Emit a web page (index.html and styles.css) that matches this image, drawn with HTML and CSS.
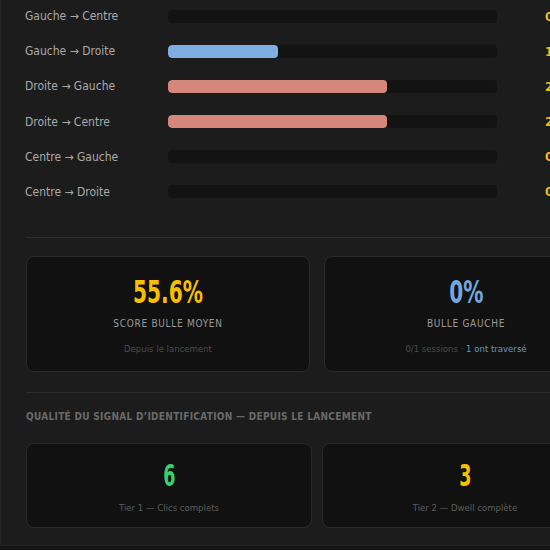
FILE: index.html
```html
<!DOCTYPE html>
<html lang="fr">
<head>
    <meta charset="UTF-8">
    <title>Stats bulles</title>
    <link rel="stylesheet" href="styles.css">
</head>
<body>
    <div class="panel">
        <div class="transitions">
            <div class="trow">
                <span class="tlabel">Gauche → Centre</span>
                <div class="track"></div>
                <span class="tval">0</span>
            </div>
            <div class="trow">
                <span class="tlabel">Gauche → Droite</span>
                <div class="track"><div class="fill bleu" style="width: 33.3%"></div></div>
                <span class="tval">1</span>
            </div>
            <div class="trow">
                <span class="tlabel">Droite → Gauche</span>
                <div class="track"><div class="fill rouge" style="width: 66.7%"></div></div>
                <span class="tval">2</span>
            </div>
            <div class="trow">
                <span class="tlabel">Droite → Centre</span>
                <div class="track"><div class="fill rouge" style="width: 66.7%"></div></div>
                <span class="tval">2</span>
            </div>
            <div class="trow">
                <span class="tlabel">Centre → Gauche</span>
                <div class="track"></div>
                <span class="tval">0</span>
            </div>
            <div class="trow">
                <span class="tlabel">Centre → Droite</span>
                <div class="track"></div>
                <span class="tval">0</span>
            </div>
        </div>

        <hr class="sep">

        <div class="cards deux">
            <div class="card">
                <div class="big jaune">55.6%</div>
                <div class="ctitle">SCORE BULLE MOYEN</div>
                <div class="csub">Depuis le lancement</div>
            </div>
            <div class="card">
                <div class="big bleu-t">0%</div>
                <div class="ctitle">BULLE GAUCHE</div>
                <div class="csub">0/1 sessions · <span class="lien">1 ont traversé</span></div>
            </div>
        </div>

        <hr class="sep sep2">

        <h3 class="section">QUALITÉ DU SIGNAL D’IDENTIFICATION — DEPUIS LE LANCEMENT</h3>

        <div class="cards tiers">
            <div class="card petite">
                <div class="num vert">6</div>
                <div class="tier">Tier 1 — Clics complets</div>
            </div>
            <div class="card petite">
                <div class="num jaune">3</div>
                <div class="tier">Tier 2 — Dwell complète</div>
            </div>
        </div>
    </div>
</body>
</html>
```

FILE: styles.css
```css
*{
    margin: 0;
    padding: 0;
    box-sizing: border-box;
}
html, body{
    overflow: hidden;
}
body{
    background-color: #151515;
    font-family: "DejaVu Sans Condensed", "DejaVu Sans", sans-serif;
    width: 550px;
    height: 550px;
}
.panel{
    width: 633px;
    background-color: #1c1c1c;
    border: 1px solid #262626;
    border-top: none;
    padding: 6px 24px 17px 24px;
}

/* transitions */
.transitions{
    display: grid;
    row-gap: 15.2px;
}
.trow{
    display: grid;
    grid-template-columns: 143px 329px 1fr;
    align-items: center;
    height: 20px;
}
.tlabel{
    color: #a9a9a9;
    font-size: 12px;
}
.track{
    height: 13px;
    background-color: #131313;
    border-radius: 4px;
    overflow: hidden;
}
.fill{
    height: 100%;
    border-radius: 4px;
}
.bleu{
    background-color: #7eafe0;
}
.rouge{
    background-color: #d6877b;
}
.tval{
    color: #f5bf0f;
    font-weight: bold;
    font-size: 13px;
    padding-left: 48px;
}

.sep{
    border: none;
    border-top: 1px solid #2c2c2c;
    margin: 35px 0 18px 1px;
}
.sep2{
    margin-top: 20px;
}

/* cartes */
.cards{
    display: grid;
    grid-template-columns: 1fr 1fr;
    margin-left: 1px;
}
.deux{
    column-gap: 14px;
}
.tiers{
    column-gap: 10px;
}
.card{
    background-color: #111111;
    border: 1px solid #2a2a2a;
    border-radius: 8px;
    height: 116px;
    display: flex;
    flex-direction: column;
    align-items: center;
    padding-top: 19px;
}
.big{
    font-size: 32px;
    font-weight: bold;
    line-height: 32px;
    transform: scaleX(0.7);
}
.jaune{
    color: #f7bf00;
}
.bleu-t{
    color: #72a8de;
}
.vert{
    color: #37d16e;
}
.ctitle{
    color: #9a9a9a;
    font-size: 10px;
    line-height: 12px;
    letter-spacing: 0.7px;
    margin-top: 10px;
}
.csub{
    color: #4c4c4c;
    font-size: 9.5px;
    line-height: 12px;
    margin-top: 13px;
}
.lien{
    color: #6a96c0;
}
.section{
    color: #6a6a6a;
    font-size: 10px;
    line-height: 12px;
    font-weight: bold;
    letter-spacing: 0.3px;
    margin: 0 0 20px 1px;
}
.petite{
    height: 85px;
    padding-top: 18px;
}
.num{
    font-size: 30px;
    font-weight: bold;
    line-height: 28px;
    transform: scaleX(0.65);
}
.tier{
    color: #5e5e5e;
    font-size: 9.5px;
    line-height: 12px;
    margin-top: 12px;
}
```
